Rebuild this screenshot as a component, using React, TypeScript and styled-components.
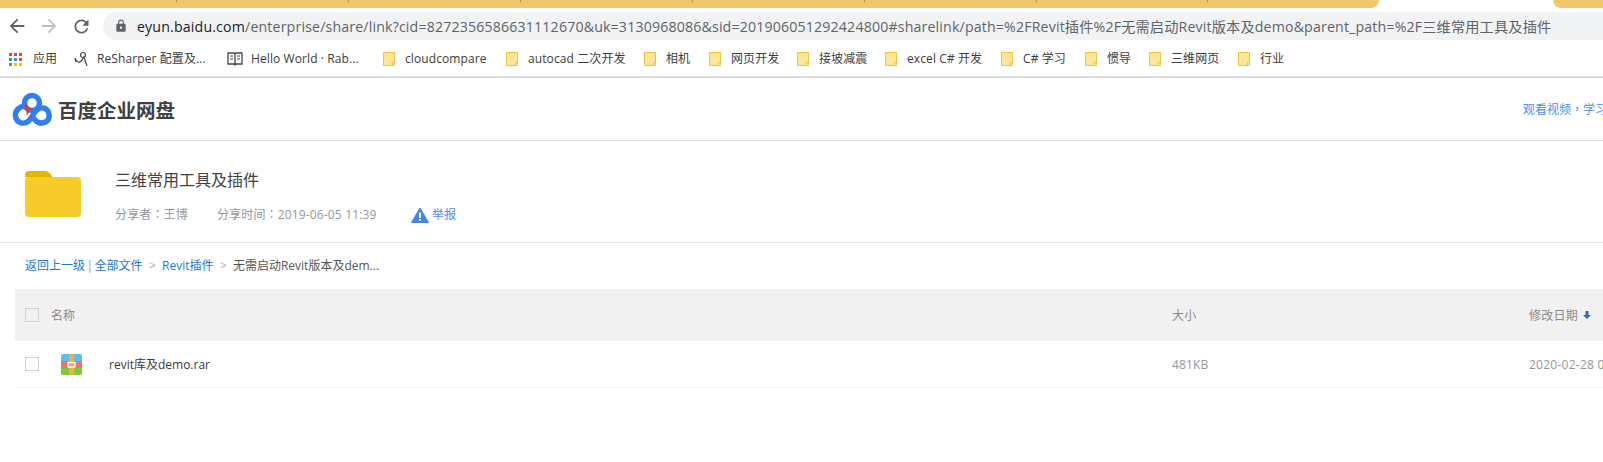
import React from "react";
import styled, { createGlobalStyle } from "styled-components";

const Global = createGlobalStyle`
  html, body { margin: 0; padding: 0; background: #fff; overflow: hidden; }
  body { font-family: "Open Sans", "Noto Sans", "Noto Sans CJK SC", sans-serif; }
`;

const Page = styled.div`
  width: 1603px;
  height: 462px;
  overflow: hidden;
  display: flex;
  flex-direction: column;
  background: #fff;
`;

const TabStrip = styled.div`
  display: flex;
  height: 8px;
  flex: none;
  background: #fff;
`;
const Tab = styled.div<{ $w?: number; $kind?: "end" | "next" | "plain" }>`
  position: relative;
  flex: ${(p) => (p.$w ? `0 0 ${p.$w}px` : "1 1 auto")};
  background: #f0c869;
  border-bottom-right-radius: ${(p) => (p.$kind === "end" ? "8px" : 0)};
  border-bottom-left-radius: ${(p) => (p.$kind === "next" ? "8px" : 0)};
  &::after {
    content: "";
    display: ${(p) => (p.$kind === "plain" ? "block" : "none")};
    position: absolute;
    right: 0;
    top: 0;
    width: 1px;
    height: 2px;
    background: #a89060;
  }
`;
const ActiveGap = styled.div`
  flex: 0 0 174px;
  background: #fff;
`;

const AddressRow = styled.div`
  display: flex;
  align-items: center;
  height: 36px;
  flex: none;
  padding-left: 6px;
`;
const NavButton = styled.span<{ $gap?: number }>`
  display: flex;
  width: 22px;
  height: 22px;
  margin-right: ${(p) => p.$gap ?? 10}px;
  align-items: center;
  justify-content: center;
`;
const Pill = styled.div`
  display: flex;
  align-items: center;
  height: 28px;
  flex: 1;
  padding-left: 11px;
  border-radius: 14px 0 0 14px;
  background: #f1f3f4;
  white-space: nowrap;
  overflow: hidden;
`;
const Url = styled.span`
  margin-left: 9px;
  font-size: 14.2px;
  color: #5f6368;
  letter-spacing: 0.15px;
`;
const Host = styled.span`
  color: #202124;
`;

const BookmarkBar = styled.div`
  display: flex;
  align-items: center;
  height: 30px;
  flex: none;
  padding-left: 9px;
  padding-bottom: 2px;
  border-bottom: 2px solid #dcdcdc;
  box-sizing: content-box;
`;
const Bookmark = styled.div<{ $after?: number }>`
  display: flex;
  align-items: center;
  margin-right: ${(p) => p.$after ?? 18}px;
`;
const BookmarkIcon = styled.span<{ $w?: number; $gap?: number }>`
  display: flex;
  flex: none;
  width: ${(p) => p.$w ?? 12}px;
  margin-right: ${(p) => p.$gap ?? 10}px;
`;
const BookmarkLabel = styled.span<{ $w: number }>`
  display: block;
  width: ${(p) => p.$w}px;
  font-size: 12px;
  line-height: 16px;
  white-space: nowrap;
  color: #3c3c3c;
  letter-spacing: 0.1px;
`;

const Header = styled.div`
  display: flex;
  align-items: center;
  justify-content: space-between;
  height: 62px;
  flex: none;
  padding-left: 12px;
  border-bottom: 1px solid #e2e2e2;
`;
const Brand = styled.div`
  display: flex;
  align-items: center;
`;
const BrandName = styled.span`
  margin-left: 6px;
  font-size: 19.5px;
  font-weight: 700;
  color: #3f3f3f;
  white-space: nowrap;
`;
const HelpLink = styled.a`
  flex: none;
  width: 80px;
  overflow: hidden;
  white-space: nowrap;
  font-size: 12px;
  color: #4e8df0;
`;
const Punct = styled.span`
  font-family: "Noto Sans CJK TC", sans-serif;
`;

const ShareInfo = styled.div`
  display: flex;
  height: 102px;
  flex: none;
  padding-left: 25px;
  border-bottom: 1px solid #e2e2e2;
  box-sizing: border-box;
`;
const FolderBox = styled.div`
  flex: none;
  width: 56px;
  margin-top: 30px;
  margin-right: 34px;
`;
const ShareText = styled.div`
  display: flex;
  flex-direction: column;
  padding-top: 28px;
`;
const ShareTitle = styled.div`
  font-size: 16px;
  line-height: 22px;
  color: #424242;
`;
const MetaRow = styled.div`
  display: flex;
  align-items: center;
  margin-top: 13px;
  font-size: 12px;
  line-height: 20px;
  color: #92979f;
  letter-spacing: 0.15px;
`;
const MetaItem = styled.span<{ $w: number }>`
  width: ${(p) => p.$w}px;
  white-space: nowrap;
`;
const Report = styled.span`
  display: flex;
  align-items: center;
  gap: 3px;
  color: #4e8df0;
`;

const Crumbs = styled.div`
  display: flex;
  align-items: center;
  height: 46px;
  flex: none;
  padding-left: 25px;
  padding-bottom: 2px;
  box-sizing: border-box;
  font-size: 12px;
  white-space: nowrap;
  color: #555;
`;
const Crumb = styled.a`
  color: #1c78d3;
`;
const Pipe = styled.span`
  margin: 0 1.500px;
  color: #999;
`;
const Chevron = styled.span`
  margin: 0 6.500px;
  color: #b0b0b0;
  font-size: 11px;
  font-family: "Liberation Sans", sans-serif;
`;

const HeadRow = styled.div`
  display: grid;
  grid-template-columns: 1157px 357px 1fr;
  align-items: center;
  height: 52px;
  flex: none;
  margin-left: 15px;
  background: #f1f1f1;
  font-size: 12px;
  color: #8a8a8a;
`;
const FileRow = styled.div`
  display: grid;
  grid-template-columns: 1157px 357px 1fr;
  align-items: center;
  height: 46px;
  flex: none;
  margin-left: 15px;
  border-bottom: 1px solid #f1f2f4;
  font-size: 12px;
  color: #92979f;
`;
const NameCell = styled.div`
  display: flex;
  align-items: center;
  padding-left: 10px;
`;
const Check = styled.span`
  flex: none;
  box-sizing: border-box;
  width: 14px;
  height: 14px;
  border: 1px solid #d2d2d2;
  background: transparent;
`;
const HeadName = styled.span`
  margin-left: 12px;
`;
const FileName = styled.span`
  margin-left: 27px;
  color: #3a3a3a;
`;
const IconBox = styled.span`
  display: flex;
  flex: none;
  margin-left: 22px;
`;
const SizeCell = styled.div`
  letter-spacing: 0.15px;
`;
const DateCell = styled.div`
  display: flex;
  align-items: center;
  gap: 5px;
  white-space: nowrap;
  overflow: hidden;
  letter-spacing: 0.25px;
`;

const Folder16 = () => (
  <svg width="12" height="14" viewBox="0 0 12 14">
    <path d="M.5.5h11v13H.5z" fill="#ffe694" stroke="#efc23f" strokeWidth="1" />
    <path d="M9.500 10.500h2.500V14H9.500z" fill="#ffe694" stroke="#efc23f" strokeWidth="1" />
  </svg>
);

const Apps = () => (
  <svg width="13" height="13" viewBox="0 0 13 13">
    {[
      ["#ea4335", "#ea4335", "#ea4335"],
      ["#34a853", "#4285f4", "#ea4335"],
      ["#34a853", "#fbbc05", "#fbbc05"],
    ].map((row, y) =>
      row.map((c, x) => <rect key={`${x}${y}`} x={x * 5} y={y * 5} width="3" height="3" fill={c} />)
    )}
  </svg>
);

const Logo = () => (
  <svg width="40" height="33" viewBox="0 0 40 33">
    <g fill="none" stroke="#2f7ff0" strokeWidth="5.400">
      <circle cx="20" cy="10" r="7.500" />
      <path d="M14 13.500 C11 13 8 14 6 16 C1.500 20.500 3 28 9 29.800 C15 31.300 18 27 21 22 C24 17 27 14 32 15 C38 17 39 26 33.500 29 C28.500 31.500 24.500 29.500 21.500 25" />
    </g>
    <path d="M11.500 11 L20 15.500 L15 22.500 Q14.500 16.500 11.500 11Z" fill="#d9402b" />
  </svg>
);

const BigFolder = () => (
  <svg width="56" height="46" viewBox="0 0 56 46">
    <path d="M0 4a4 4 0 0 1 4-4h16c3 0 6 2.500 7 6H0z" fill="#e8b400" />
    <rect x="0" y="6" width="56" height="40" rx="4" fill="#f8ca2a" />
  </svg>
);

const RarIcon = () => (
  <svg width="21" height="21" viewBox="0 0 21 21">
    <defs>
      <clipPath id="rr">
        <rect width="21" height="21" rx="2" />
      </clipPath>
    </defs>
    <g clipPath="url(#rr)">
      <rect width="21" height="7" fill="#59c1f2" />
      <rect y="7" width="21" height="7" fill="#f56f6c" />
      <rect y="14" width="21" height="7" fill="#7dcb3c" />
      <rect x="8" width="5" height="21" fill="#f7ae45" />
      <rect x="7" y="8.500" width="7" height="4.500" fill="#f7ae45" stroke="#fff" strokeWidth="1.300" />
    </g>
  </svg>
);

const tabWidths = [177, 172, 172, 172, 172, 172, 171];

const folders: [string, number][] = [
  ["cloudcompare", 83],
  ["autocad 二次开发", 98],
  ["相机", 25],
  ["网页开发", 48],
  ["接坡减震", 48],
  ["excel C# 开发", 76],
  ["C# 学习", 44],
  ["惯导", 24],
  ["三维网页", 49],
  ["行业", 24],
];

export default function App() {
  return (
    <Page>
      <Global />
      <TabStrip>
        {tabWidths.map((w, i) => (
          <Tab key={i} $w={w} $kind="plain" />
        ))}
        <Tab $w={171} $kind="end" />
        <ActiveGap />
        <Tab $kind="next" />
      </TabStrip>
      <AddressRow>
        <NavButton>
          <svg width="22" height="22" viewBox="0 0 24 24" fill="#5f6368">
            <path d="M20 11H7.830l5.590-5.590L12 4l-8 8 8 8 1.410-1.410L7.830 13H20v-2z" />
          </svg>
        </NavButton>
        <NavButton>
          <svg width="22" height="22" viewBox="0 0 24 24" fill="#bdc1c6">
            <path d="M12 4l-1.410 1.410L16.170 11H4v2h12.170l-5.580 5.590L12 20l8-8z" />
          </svg>
        </NavButton>
        <NavButton $gap={11}>
          <svg width="21" height="21" viewBox="0 0 24 24" fill="#5f6368">
            <path d="M17.650 6.350A7.958 7.958 0 0 0 12 4c-4.420 0-7.990 3.580-7.990 8s3.570 8 7.990 8c3.730 0 6.840-2.550 7.730-6h-2.080A5.990 5.990 0 0 1 12 18c-3.310 0-6-2.690-6-6s2.690-6 6-6c1.660 0 3.140.690 4.220 1.780L13 11h7V4l-2.350 2.350z" />
          </svg>
        </NavButton>
        <Pill>
          <svg width="14" height="14" viewBox="0 0 24 24" fill="#5f6368">
            <path d="M18 8h-1V6c0-2.760-2.240-5-5-5S7 3.240 7 6v2H6c-1.100 0-2 .9-2 2v10c0 1.100.9 2 2 2h12c1.100 0 2-.9 2-2V10c0-1.100-.9-2-2-2zm-6 9c-1.100 0-2-.9-2-2s.9-2 2-2 2 .9 2 2-.9 2-2 2zm3.100-9H8.900V6c0-1.710 1.390-3.100 3.100-3.100 1.710 0 3.100 1.390 3.100 3.100v2z" />
          </svg>
          <Url>
            <Host>eyun.baidu.com</Host>
            /enterprise/share/link?cid=8272356586631112670&uk=3130968086&sid=201906051292424800#sharelink/path=%2FRevit插件%2F无需启动Revit版本及demo&parent_path=%2F三维常用工具及插件
          </Url>
        </Pill>
      </AddressRow>
      <BookmarkBar>
        <Bookmark $after={17}>
          <BookmarkIcon $w={14} $gap={10}>
            <Apps />
          </BookmarkIcon>
          <BookmarkLabel $w={24}>应用</BookmarkLabel>
        </Bookmark>
        <Bookmark $after={22}>
          <BookmarkIcon $w={14} $gap={9}>
            <svg width="14" height="16" viewBox="0 0 14 16" fill="none" stroke="#444" strokeWidth="1.200">
              <circle cx="9" cy="4" r="2.500" />
              <path d="M1 7c1 4 4 5 6 3l3-4 3 9M1 7l1 4" />
            </svg>
          </BookmarkIcon>
          <BookmarkLabel $w={108}>ReSharper 配置及...</BookmarkLabel>
        </Bookmark>
        <Bookmark $after={21}>
          <BookmarkIcon $w={16} $gap={8}>
            <svg width="16" height="14" viewBox="0 0 16 14" fill="none" stroke="#444" strokeWidth="1.300">
              <path d="M1 1h6l1 1 1-1h6v11H9l-1 1-1-1H1zM8 2v11" />
              <path d="M3 4h3M3 7h3M10 4h3M10 7h3" strokeWidth="1" />
            </svg>
          </BookmarkIcon>
          <BookmarkLabel $w={111}>Hello World · Rab...</BookmarkLabel>
        </Bookmark>
        {folders.map(([label, w]) => (
          <Bookmark key={label}>
            <BookmarkIcon>
              <Folder16 />
            </BookmarkIcon>
            <BookmarkLabel $w={w}>{label}</BookmarkLabel>
          </Bookmark>
        ))}
      </BookmarkBar>
      <Header>
        <Brand>
          <Logo />
          <BrandName>百度企业网盘</BrandName>
        </Brand>
        <HelpLink>
          观看视频<Punct>，</Punct>学习使用
        </HelpLink>
      </Header>
      <ShareInfo>
        <FolderBox>
          <BigFolder />
        </FolderBox>
        <ShareText>
          <ShareTitle>三维常用工具及插件</ShareTitle>
          <MetaRow>
            <MetaItem $w={102}>
              分享者<Punct>：</Punct>王博
            </MetaItem>
            <MetaItem $w={194}>
              分享时间<Punct>：</Punct>2019-06-05 11:39
            </MetaItem>
            <Report>
              <svg width="18" height="16" viewBox="0 0 18 16">
                <path d="M9 1L17.500 15.500H.5z" fill="#4486e4" stroke="#4486e4" strokeLinejoin="round" />
                <rect x="8.100" y="5.500" width="1.800" height="5.500" fill="#fff" />
                <rect x="8.100" y="12" width="1.800" height="1.800" fill="#fff" />
              </svg>
              举报
            </Report>
          </MetaRow>
        </ShareText>
      </ShareInfo>
      <Crumbs>
        <Crumb>返回上一级</Crumb>
        <Pipe>|</Pipe>
        <Crumb>全部文件</Crumb>
        <Chevron>&gt;</Chevron>
        <Crumb>Revit插件</Crumb>
        <Chevron>&gt;</Chevron>
        无需启动Revit版本及dem...
      </Crumbs>
      <HeadRow>
        <NameCell>
          <Check />
          <HeadName>名称</HeadName>
        </NameCell>
        <SizeCell>大小</SizeCell>
        <DateCell>
          修改日期
          <svg width="8" height="8" viewBox="0 0 8 8">
            <path d="M2.500 0h3v4H8L4 8 0 4h2.500z" fill="#1c6fd3" />
          </svg>
        </DateCell>
      </HeadRow>
      <FileRow>
        <NameCell>
          <Check />
          <IconBox>
            <RarIcon />
          </IconBox>
          <FileName>revit库及demo.rar</FileName>
        </NameCell>
        <SizeCell>481KB</SizeCell>
        <DateCell>2020-02-28 09:41</DateCell>
      </FileRow>
    </Page>
  );
}
